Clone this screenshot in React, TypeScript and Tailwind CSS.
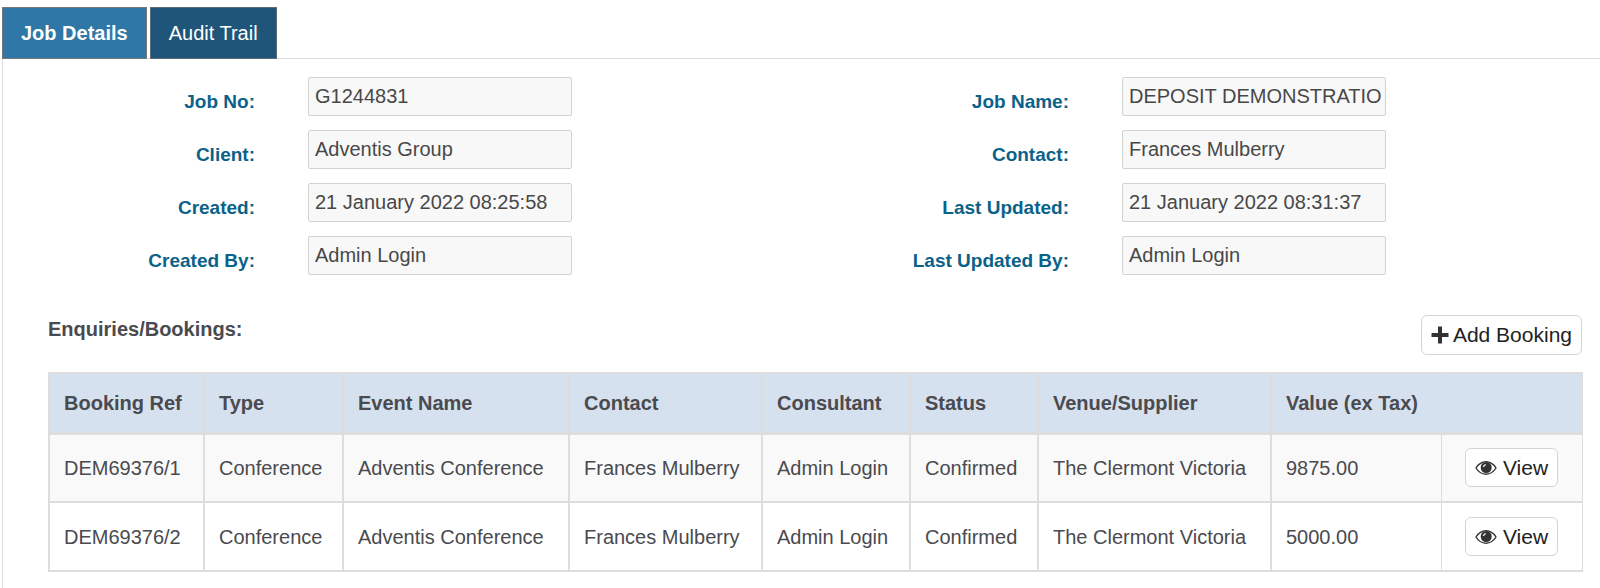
import React from "react";

interface FieldProps {
  id: string;
  label: string;
  value: string;
}

interface Booking {
  ref: string;
  type: string;
  eventName: string;
  contact: string;
  consultant: string;
  status: string;
  venue: string;
  value: string;
}

const leftFields: FieldProps[] = [
  { id: "job-no", label: "Job No:", value: "G1244831" },
  { id: "client", label: "Client:", value: "Adventis Group" },
  { id: "created", label: "Created:", value: "21 January 2022 08:25:58" },
  { id: "created-by", label: "Created By:", value: "Admin Login" },
];

const rightFields: FieldProps[] = [
  { id: "job-name", label: "Job Name:", value: "DEPOSIT DEMONSTRATIO" },
  { id: "contact", label: "Contact:", value: "Frances Mulberry" },
  { id: "last-updated", label: "Last Updated:", value: "21 January 2022 08:31:37" },
  { id: "last-updated-by", label: "Last Updated By:", value: "Admin Login" },
];

const headings = [
  "Booking Ref",
  "Type",
  "Event Name",
  "Contact",
  "Consultant",
  "Status",
  "Venue/Supplier",
  "Value (ex Tax)",
];

const bookings: Booking[] = [
  {
    ref: "DEM69376/1",
    type: "Conference",
    eventName: "Adventis Conference",
    contact: "Frances Mulberry",
    consultant: "Admin Login",
    status: "Confirmed",
    venue: "The Clermont Victoria",
    value: "9875.00",
  },
  {
    ref: "DEM69376/2",
    type: "Conference",
    eventName: "Adventis Conference",
    contact: "Frances Mulberry",
    consultant: "Admin Login",
    status: "Confirmed",
    venue: "The Clermont Victoria",
    value: "5000.00",
  },
];

const PlusIcon: React.FC = () => (
  <svg viewBox="0 0 18 18" className="w-[18px] h-[18px]" fill="#333" aria-hidden="true">
    <path d="M7.500 .5h3a.5.5 0 0 1 .5.5v6H17a.5.5 0 0 1 .5.5v3a.5.5 0 0 1-.5.5h-6v6a.5.5 0 0 1-.5.5h-3a.5.5 0 0 1-.5-.5v-6H1a.5.5 0 0 1-.5-.5v-3A.5.5 0 0 1 1 7h6V1a.5.5 0 0 1 .5-.5z" />
  </svg>
);

const EyeIcon: React.FC = () => (
  <svg viewBox="0 0 22 16" className="w-[22px] h-4" aria-hidden="true">
    <path
      d="M1 8C3.500 4 7 1.800 11 1.800S18.500 4 21 8c-2.500 4-6 6.200-10 6.200S3.500 12 1 8z"
      fill="#fff"
      stroke="#333"
      strokeWidth="1.400"
    />
    <circle cx="11.200" cy="7.500" r="5.500" fill="#333" />
    <path d="M8.500 7c.1-1.300 1-2.200 2.300-2.400" fill="none" stroke="#fff" strokeWidth="1.300" />
  </svg>
);

const Field: React.FC<FieldProps> = ({ id, label, value }) => (
  <div className="flex gap-[53px]">
    <label htmlFor={id} className="w-[252px] pt-[11px] text-right text-[19px] font-bold leading-7 text-[#0b6289]">
      {label}
    </label>
    <input
      id={id}
      type="text"
      readOnly
      defaultValue={value}
      className="w-[264px] h-[39px] pl-1.5 border border-[#d2d2d2] rounded-xs bg-[#f8f8f8] text-[#484848]"
    />
  </div>
);

const App: React.FC = () => {
  return (
    <main className="pt-[7px] pl-0.5 bg-white font-['Liberation_Sans',Arial,sans-serif] text-xl text-[#4a4a4f]">
      <nav className="flex gap-[3px] text-white">
        <a href="#details" className="relative -mb-px px-[18px] py-[11px] border border-[#777] bg-[#2e77a6] font-bold leading-7">
          Job Details
        </a>
        <a href="#audit" className="relative -mb-px px-[18px] py-[11px] border border-[#5d6c76] bg-[#1f5579] leading-7">
          Audit Trail
        </a>
      </nav>

      <section className="border-t border-l border-[#ddd] pt-[18px] pb-4">
        <div className="grid grid-cols-2 gap-x-[31px]">
          <div className="flex flex-col gap-3.5">
            {leftFields.map((field) => (
              <Field key={field.id} {...field} />
            ))}
          </div>
          <div className="flex flex-col gap-3.5">
            {rightFields.map((field) => (
              <Field key={field.id} {...field} />
            ))}
          </div>
        </div>

        <div className="pt-10 pl-[45px] pr-[18px]">
          <div className="flex justify-between items-start">
            <h2 className="font-bold leading-7">Enquiries/Bookings:</h2>
            <button
              type="button"
              className="flex items-center gap-1 h-10 px-[9px] border border-[#d4d4d4] rounded-md bg-white text-[21px] text-[#222]"
            >
              <PlusIcon />
              Add Booking
            </button>
          </div>

          <table className="mt-[17px] w-full table-fixed border-collapse text-left">
            <colgroup>
              <col className="w-[155px]" />
              <col className="w-[139px]" />
              <col className="w-[226px]" />
              <col className="w-[193px]" />
              <col className="w-[148px]" />
              <col className="w-[128px]" />
              <col className="w-[233px]" />
              <col className="w-[170px]" />
              <col className="w-[141px]" />
            </colgroup>
            <thead>
              <tr className="h-[60px] bg-[#d6e1ef]">
                {headings.map((heading) => (
                  <th key={heading} scope="col" className="px-3.5 border-t-2 border-l-2 border-b-3 border-[#ddd] font-bold">
                    {heading}
                  </th>
                ))}
                <th aria-label="Actions" className="border-t-2 border-x border-b-3 border-[#ddd]" />
              </tr>
            </thead>
            <tbody>
              {bookings.map((booking) => (
                <tr key={booking.ref} className="h-[69px] odd:bg-[#f9f9f9]">
                  {Object.values(booking).map((value, index) => (
                    <td key={index} className="px-3.5 border-l-2 border-b-2 border-[#ddd] whitespace-nowrap">
                      {value}
                    </td>
                  ))}
                  <td className="border-x border-b-2 border-[#ddd]">
                    <button
                      type="button"
                      className="flex items-center gap-1.5 mx-auto h-[39px] px-[9px] border border-[#d4d4d4] rounded-md bg-white text-[21px] text-[#222]"
                    >
                      <EyeIcon />
                      View
                    </button>
                  </td>
                </tr>
              ))}
            </tbody>
          </table>
        </div>
      </section>
    </main>
  );
};

export default App;
